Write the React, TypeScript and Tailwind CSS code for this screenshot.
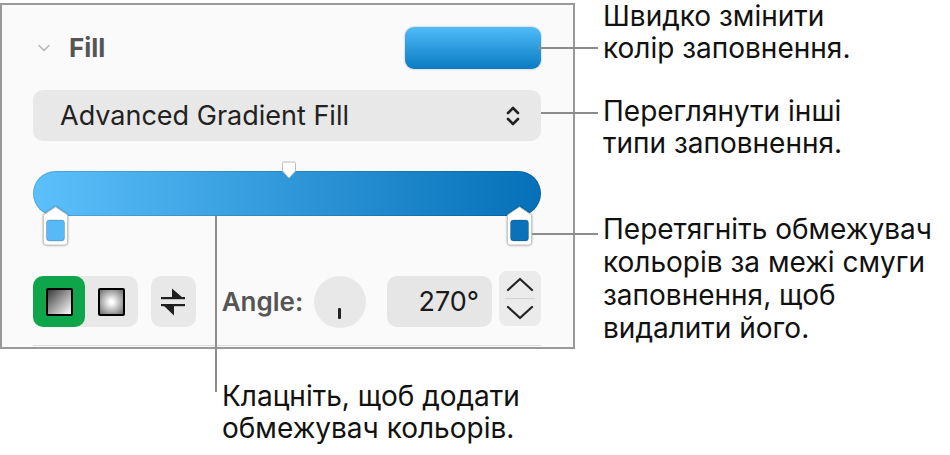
import { ChevronDown, ChevronsUpDown } from 'lucide-react';

const font = { fontFamily: 'Inter, "Noto Sans", sans-serif' };

function Stop({ color }: { color: string }) {
  return (
    <svg width="27" height="40" viewBox="0 0 27 40" className="drop-shadow-[0_0_1px_rgba(0,0,0,0.35)]">
      <path d="M13.5 1 L25.5 9 L25.5 36 Q25.5 39 22.5 39 L4.5 39 Q1.5 39 1.5 36 L1.5 9 Z" fill="white" stroke="#c8c8c8" strokeWidth="1" />
      <rect x="4.5" y="14" width="18" height="21" rx="3" fill={color} stroke="rgba(0,0,0,0.18)" strokeWidth="1" />
    </svg>
  );
}

function LinearIcon() {
  return (
    <div className="w-[27px] h-[28px] border-2 border-black rounded-[2px] bg-[linear-gradient(135deg,#3a3a3a,#ffffff)]" />
  );
}

function RadialIcon() {
  return (
    <div className="w-[27px] h-[28px] border-2 border-black rounded-[2px] bg-[radial-gradient(circle,#ffffff_10%,#6a6a6a_100%)]" />
  );
}

function SwapIcon() {
  return (
    <svg width="24" height="28" viewBox="0 0 24 28">
      <path d="M11 0.5 L11 10 L22 10 Z" fill="#1f1f1f" />
      <rect x="0" y="9" width="24" height="2.2" fill="#1f1f1f" />
      <rect x="0" y="16" width="24" height="2.2" fill="#1f1f1f" />
      <path d="M13 17 L13 27.5 L2 17 Z" fill="#1f1f1f" />
    </svg>
  );
}

function Stepper() {
  return (
    <div className="ml-[7px] w-[42px] h-[55px] -mt-[7px] rounded-[8px] bg-[#ebebeb] flex flex-col items-center justify-center gap-[6px]">
      <svg width="28" height="16" viewBox="0 0 28 16">
        <path d="M2 14 L14 3 L26 14" fill="none" stroke="#222" strokeWidth="2.2" strokeLinecap="round" strokeLinejoin="round" />
      </svg>
      <div className="w-[30px] h-px bg-[#d2d2d2]" />
      <svg width="28" height="16" viewBox="0 0 28 16">
        <path d="M2 2 L14 13 L26 2" fill="none" stroke="#222" strokeWidth="2.2" strokeLinecap="round" strokeLinejoin="round" />
      </svg>
    </div>
  );
}

function Panel() {
  return (
    <div className="relative w-[575px] h-[346px] border-2 border-[#999] bg-[#fafafa] pl-[31px] pr-[32px]">
      {/* header */}
      <div className="mt-[22px] h-[42px] flex items-center">
        <ChevronDown size={20} strokeWidth={1.8} className="text-[#b4b4b4] ml-[1px]" />
        <span className="ml-[15px] text-[26px] font-bold text-[#555] leading-none">Fill</span>
        <div className="ml-auto w-[136px] h-[42px] rounded-[9px] bg-[linear-gradient(180deg,#4fbcf8,#0a7bc3)] shadow-[0_0_2px_rgba(0,0,0,0.35)]" />
      </div>

      {/* fill type popup */}
      <div className="mt-[21px] h-[51px] rounded-[10px] bg-[#e8e8e8] flex items-center pl-[27px] pr-[16px]">
        <span className="text-[27px] text-[#222] leading-none">Advanced Gradient Fill</span>
        <ChevronsUpDown size={24} strokeWidth={2.6} className="ml-auto text-[#222]" />
      </div>

      {/* gradient bar */}
      <div className="relative mt-[30px] h-[45px] w-[508px] rounded-full bg-[linear-gradient(90deg,#5cc0fb,#0570b8)] shadow-[inset_0_0_0_1px_rgba(0,0,0,0.12)]">
        <svg width="16" height="18" viewBox="0 0 16 18" className="absolute left-[248px] top-[-10px]">
          <path d="M1.5 2.5 Q1.5 1 3 1 L13 1 Q14.5 1 14.5 2.5 L14.5 10 L8 17 L1.5 10 Z" fill="white" stroke="#bdbdbd" strokeWidth="1" />
        </svg>
        <div className="absolute left-[9px] top-[35px]">
          <Stop color="#57baf7" />
        </div>
        <div className="absolute left-[473px] top-[35px]">
          <Stop color="#0b72b9" />
        </div>
      </div>

      {/* bottom controls */}
      <div className="mt-[60px] h-[51px] flex items-center">
        <div className="h-[51px] w-[105px] rounded-[10px] bg-[#e8e8e8] flex">
          <div className="w-[52px] h-[51px] rounded-[10px] bg-[#0ea54b] flex items-center justify-center">
            <LinearIcon />
          </div>
          <div className="flex-1 flex items-center justify-center">
            <RadialIcon />
          </div>
        </div>
        <div className="ml-[13px] w-[45px] h-[51px] rounded-[10px] bg-[#e8e8e8] flex items-center justify-center">
          <SwapIcon />
        </div>
        <span className="ml-[26px] w-[83px] text-[26px] font-semibold text-[#555] leading-none whitespace-nowrap">Angle:</span>
        <div className="relative ml-[10px] w-[52px] h-[52px] rounded-full bg-[#e8e8e8]">
          <div className="absolute left-[24px] top-[32px] w-[3px] h-[11px] rounded-[1px] bg-[#222]" />
        </div>
        <div className="ml-[21px] w-[105px] h-[51px] rounded-[10px] bg-[#e6e6e6] flex items-center justify-end pr-[13px]">
          <span className="text-[27px] text-[#1a1a1a] leading-none">270°</span>
        </div>
        <Stepper />
      </div>

      <div className="mt-[18px] h-px bg-[#dedede]" />
    </div>
  );
}

export default function App() {
  return (
    <div className="relative w-[950px] h-[455px] bg-white flex overflow-hidden" style={font}>
      <div className="w-[575px] shrink-0 pt-[3px] flex flex-col">
        <Panel />
        <div className="ml-[222px] mt-[31px] text-[28px] leading-[32px] text-[#111] whitespace-nowrap">
          <p>Клацніть, щоб додати</p>
          <p>обмежувач кольорів.</p>
        </div>
      </div>
      <div className="pl-[28px] text-[28px] leading-[32px] text-[#111] whitespace-nowrap">
        <div>
          <p>Швидко змінити</p>
          <p>колір заповнення.</p>
        </div>
        <div className="mt-[31px]">
          <p>Переглянути інші</p>
          <p>типи заповнення.</p>
        </div>
        <div className="mt-[54px] leading-[33px]">
          <p>Перетягніть обмежувач</p>
          <p>кольорів за межі смуги</p>
          <p>заповнення, щоб</p>
          <p>видалити його.</p>
        </div>
      </div>

      {/* callout lines */}
      <div className="absolute left-[538px] top-[47px] w-[60px] h-[2px] bg-[#8c8c8c]" />
      <div className="absolute left-[541px] top-[112px] w-[57px] h-[2px] bg-[#8c8c8c]" />
      <div className="absolute left-[532px] top-[233px] w-[66px] h-[2px] bg-[#8c8c8c]" />
      <div className="absolute left-[215px] top-[216px] w-[2px] h-[176px] bg-[#8c8c8c]" />
    </div>
  );
}
